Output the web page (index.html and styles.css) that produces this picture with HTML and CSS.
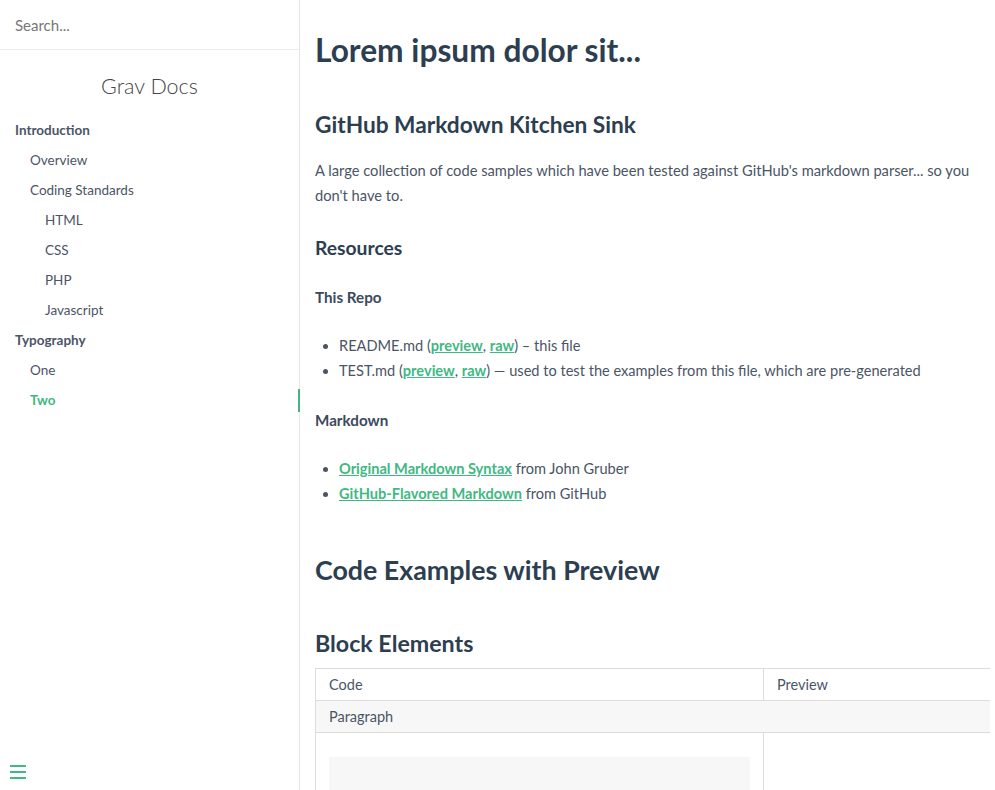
FILE: index.html
```html
<!DOCTYPE html>
<html>
<head>
<meta charset="utf-8">
<link rel="stylesheet" href="styles.css">
</head>
<body>
<div class="page">
  <aside class="sidebar">
    <div class="search">Search...</div>
    <div class="brand">Grav Docs</div>
    <ul class="nav">
      <li class="l1">Introduction</li>
      <li class="l2">Overview</li>
      <li class="l2">Coding Standards</li>
      <li class="l3">HTML</li>
      <li class="l3">CSS</li>
      <li class="l3">PHP</li>
      <li class="l3">Javascript</li>
      <li class="l1">Typography</li>
      <li class="l2">One</li>
      <li class="l2 active">Two</li>
    </ul>
    <div class="spacer"></div>
    <div class="burger"><span></span><span></span><span></span></div>
  </aside>
  <main class="content">
    <h1 class="h1a">Lorem ipsum dolor sit...</h1>
    <h2 class="h2a">GitHub Markdown Kitchen Sink</h2>
    <p class="intro">A large collection of code samples which have been tested against GitHub's markdown parser... so you don't have to.</p>
    <h3 class="h3a">Resources</h3>
    <h4 class="h4a">This Repo</h4>
    <ul class="list">
      <li>README.md (<a href="#">preview</a>, <a href="#">raw</a>) – this file</li>
      <li>TEST.md (<a href="#">preview</a>, <a href="#">raw</a>) — used to test the examples from this file, which are pre-generated</li>
    </ul>
    <h4 class="h4b">Markdown</h4>
    <ul class="list">
      <li><a href="#">Original Markdown Syntax</a> from John Gruber</li>
      <li><a href="#">GitHub-Flavored Markdown</a> from GitHub</li>
    </ul>
    <h1 class="h1b">Code Examples with Preview</h1>
    <h2 class="h2b">Block Elements</h2>
    <table class="examples">
      <tr><td class="c1">Code</td><td class="c2">Preview</td></tr>
      <tr class="section"><td colspan="2">Paragraph</td></tr>
      <tr class="body"><td class="c1"><div class="code"></div></td><td class="c2"></td></tr>
    </table>
  </main>
</div>
</body>
</html>
```
FILE: styles.css
```css
html, body {
  margin: 0;
  padding: 0;
  height: 100%;
  overflow: hidden;
  background: #fff;
}
body {
  font-family: "Lato", "Noto Sans", sans-serif;
  color: #4a5566;
}
.page {
  display: flex;
  height: 790px;
  width: 990px;
}
.sidebar {
  width: 299px;
  flex: none;
  border-right: 1px solid #e6e6e6;
  display: flex;
  flex-direction: column;
  position: relative;
}
.search {
  height: 50px;
  box-sizing: border-box;
  border-bottom: 1px solid #ececec;
  padding: 0 15px;
  line-height: 50px;
  font-size: 15px;
  color: #777;
}
.brand {
  text-align: center;
  font-size: 21.5px;
  font-weight: 300;
  color: #444;
  margin-top: 21px;
  line-height: 30px;
}
.nav {
  list-style: none;
  margin: 14px 0 0 0;
  padding: 0;
}
.nav li {
  height: 30px;
  line-height: 30px;
  font-size: 13.5px;
  color: #4b5567;
  position: relative;
}
.nav .l1 { padding-left: 15px; font-weight: 700; }
.nav .l2 { padding-left: 30px; }
.nav .l3 { padding-left: 45px; }
.nav .active { color: #41b883; font-weight: 700; }
.nav .active::after {
  content: "";
  position: absolute;
  right: -1px;
  top: 4px;
  width: 2px;
  height: 23px;
  background: #41b883;
}
.spacer { flex: 1; }
.burger {
  display: flex;
  flex-direction: column;
  gap: 4px;
  padding: 0 0 11px 10px;
}
.burger span {
  display: block;
  width: 16px;
  height: 2px;
  background: #41b883;
}
.content {
  flex: 1;
  min-width: 0;
  padding: 0 0 0 15px;
  overflow: hidden;
  color: #2c3e50;
}
.content h1, .content h2, .content h3, .content h4, .content p, .content ul {
  margin: 0;
}
.h1a {
  font-size: 31.7px;
  font-weight: 700;
  line-height: 40px;
  margin-top: 30px !important;
}
.h2a {
  font-size: 22.7px;
  font-weight: 700;
  line-height: 30px;
  margin-top: 40px !important;
}
.intro {
  font-size: 14.7px;
  line-height: 25px;
  color: #4a5566;
  margin-top: 18px !important;
  padding-right: 15px;
}
.h3a {
  font-size: 19.3px;
  font-weight: 700;
  line-height: 26px;
  margin-top: 27px !important;
}
.h4a, .h4b {
  font-size: 15.2px;
  font-weight: 700;
  line-height: 22px;
  color: #3a4a5c;
}
.h4a { margin-top: 25px !important; }
.h4b { margin-top: 26px !important; }
.list {
  padding-left: 24px;
  font-size: 14.6px;
  line-height: 25px;
  color: #4a5566;
  margin-top: 25px !important;
}
.list a {
  color: #41b883;
  font-weight: 700;
  text-decoration: underline;
}
.h1b {
  font-size: 26.8px;
  font-weight: 700;
  line-height: 40px;
  margin-top: 44px !important;
}
.h2b {
  font-size: 23.2px;
  font-weight: 700;
  line-height: 30px;
  margin-top: 38px !important;
}
.examples {
  margin-top: 10px;
  border-collapse: collapse;
  width: 900px;
  table-layout: fixed;
  font-size: 14.5px;
  color: #4a5566;
}
.examples td {
  border: 1px solid #dcdcdc;
  height: 31px;
  padding: 0 13px;
  vertical-align: middle;
}
.examples .c1 { width: 421px; }
.examples .section td { background: #f7f7f7; }
.examples .body td { height: 80px; vertical-align: top; padding-top: 24px; }
.code {
  background: #f7f7f7;
  height: 60px;
}
```
